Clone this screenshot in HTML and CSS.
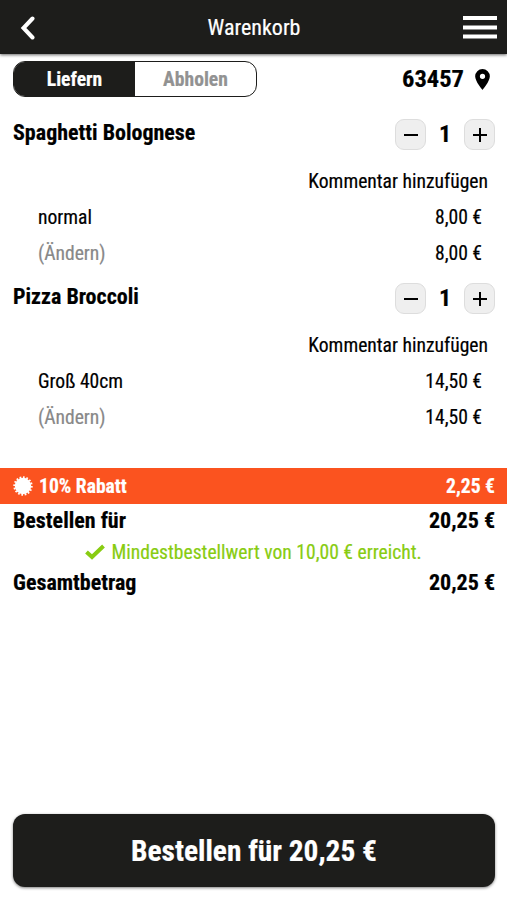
FILE: index.html
```html
<!DOCTYPE html>
<html lang="de">
<head>
  <meta charset="UTF-8">
  <meta name="viewport" content="width=device-width, initial-scale=1">
  <title>Warenkorb</title>
  <link rel="stylesheet" href="styles.css">
</head>
<body>
  <header class="topbar">
    <svg class="back" viewBox="0 0 16 24"><path d="M12.500 2.500 3.500 12l9 9.500"/></svg>
    <h1>Warenkorb</h1>
    <svg class="menu" viewBox="0 0 34 24"><path d="M0 2h34M0 11.500h34M0 20.500h34"/></svg>
  </header>

  <main>
    <div class="delivery">
      <div class="toggle">
        <span class="active">Liefern</span>
        <span>Abholen</span>
      </div>
      <div class="zip">
        <span>63457</span>
        <svg class="pin" viewBox="0 0 14 20"><path fill-rule="evenodd" d="M7 0a7 7 0 0 0-7 7c0 5 7 13 7 13s7-8 7-13a7 7 0 0 0-7-7zm0 4.500a2.500 2.500 0 1 1 0 5 2.500 2.500 0 0 1 0-5z"/></svg>
      </div>
    </div>

    <section class="item">
      <div class="item-head">
        <h2>Spaghetti Bolognese</h2>
        <div class="amount">
          <button type="button"><svg viewBox="0 0 14 14"><path d="M0 7h14"/></svg></button>
          <span>1</span>
          <button type="button"><svg viewBox="0 0 14 14"><path d="M0 7h14M7 0v14"/></svg></button>
        </div>
      </div>
      <div class="comment">Kommentar hinzufügen</div>
      <div class="option"><span>normal</span><span>8,00 €</span></div>
      <div class="option"><span class="change">(Ändern)</span><span>8,00 €</span></div>
    </section>

    <section class="item">
      <div class="item-head">
        <h2>Pizza Broccoli</h2>
        <div class="amount">
          <button type="button"><svg viewBox="0 0 14 14"><path d="M0 7h14"/></svg></button>
          <span>1</span>
          <button type="button"><svg viewBox="0 0 14 14"><path d="M0 7h14M7 0v14"/></svg></button>
        </div>
      </div>
      <div class="comment">Kommentar hinzufügen</div>
      <div class="option"><span>Groß 40cm</span><span>14,50 €</span></div>
      <div class="option"><span class="change">(Ändern)</span><span>14,50 €</span></div>
    </section>

    <div class="discount">
      <svg class="badge" viewBox="0 0 20 20"><circle cx="10" cy="10" r="8.200"/><circle class="teeth" cx="10" cy="10" r="8.700" pathLength="32"/></svg>
      <span>10% Rabatt</span>
      <span class="price">2,25 €</span>
    </div>
    <div class="total"><span>Bestellen für</span><span>20,25 €</span></div>
    <div class="minimum">
      <svg class="check" viewBox="0 0 20 16"><path d="M1.500 8 7 13 18.500 2"/></svg>
      <span>Mindestbestellwert von 10,00 € erreicht.</span>
    </div>
    <div class="total"><span>Gesamtbetrag</span><span>20,25 €</span></div>
  </main>

  <button class="order" type="button">Bestellen für 20,25 €</button>
</body>
</html>
```

FILE: styles.css
```css
* { box-sizing: border-box; }
body {
  margin: 0;
  height: 100vh;
  display: flex;
  flex-direction: column;
  background: #fff;
  color: #000;
  font-family: "Roboto Condensed", Roboto, sans-serif;
  font-stretch: 75%;
  font-size: 19.6px;
  line-height: 24px;
  -webkit-text-stroke: .2px;
}
svg { display: block; fill: none; }
button { font: inherit; font-stretch: 75%; }
h1, h2 { margin: 0; }

.topbar {
  flex: none;
  display: flex;
  justify-content: space-between;
  align-items: center;
  height: 54px;
  padding: 2px 10px 0 20px;
  background: #1d1d1b;
  color: #fff;
  box-shadow: 0 1px 3px rgba(0,0,0,.6);
}
.topbar h1 { font-size: 22px; font-weight: 400; margin-left: 9px; }
.back { width: 16px; height: 24px; stroke: #fff; stroke-width: 4; stroke-linecap: round; }
.menu { width: 34px; height: 24px; stroke: #fff; stroke-width: 4; }

main { flex: 1; }
.delivery {
  display: flex;
  justify-content: space-between;
  align-items: center;
  padding: 7px 17px 0 13px;
}
.toggle {
  display: flex;
  width: 244px;
  height: 36px;
  border: 1px solid #1d1d1b;
  border-radius: 12px;
  overflow: hidden;
  font-weight: 700;
  line-height: 36px;
  text-align: center;
  color: #929292;
}
.toggle span { flex: 1; }
.toggle .active { background: #1d1d1b; color: #fff; }
.zip { display: flex; align-items: center; gap: 11px; font-size: 24.5px; font-weight: 700; }
.pin { width: 15px; height: 21px; fill: #000; }

.item { height: 164px; padding: 0 12px 0 13px; }
.delivery + .item { margin-top: 22px; }
.item-head { display: flex; justify-content: space-between; height: 44px; }
.item-head h2 { font-size: 22px; font-weight: 700; line-height: 27px; }
.amount { display: flex; height: 30px; }
.amount span { width: 38px; text-align: center; font-size: 24px; font-weight: 700; line-height: 30px; }
.amount button {
  display: flex;
  align-items: center;
  justify-content: center;
  width: 31px;
  height: 31px;
  padding: 0;
  border: 1px solid #ddd;
  border-radius: 9px;
  background: #efefef;
}
.amount svg { width: 14px; height: 14px; stroke: #000; stroke-width: 2; }
.comment { height: 36px; line-height: 38px; padding-right: 7px; text-align: right; }
.option {
  display: flex;
  justify-content: space-between;
  height: 36px;
  line-height: 38px;
  padding: 0 13px 0 25px;
}
.change { color: #888; }

.discount {
  display: flex;
  align-items: center;
  gap: 6px;
  height: 36px;
  line-height: 38px;
  margin-top: 21px;
  padding: 0 12px 0 13px;
  background: #fb531f;
  color: #fff;
  font-weight: 700;
}
.discount span { height: 36px; }
.discount .price { margin-left: auto; }
.badge { width: 20px; height: 20px; fill: #fff; }
.badge .teeth { fill: none; stroke: #fff; stroke-width: 2; stroke-dasharray: 1; }
.total {
  display: flex;
  justify-content: space-between;
  height: 34px;
  line-height: 34px;
  padding: 0 12px 0 13px;
  font-size: 22px;
  font-weight: 700;
}
.minimum {
  display: flex;
  align-items: center;
  justify-content: center;
  gap: 6px;
  height: 28px;
  line-height: 30px;
  color: #8c1;
}
.minimum span { height: 28px; }
.check { width: 20px; height: 16px; stroke: #8c1; stroke-width: 4; }

.order {
  flex: none;
  height: 73px;
  margin: 0 12px 13px 13px;
  border: 0;
  border-radius: 12px;
  background: #1d1d1b;
  color: #fff;
  font-size: 29.4px;
  font-weight: 700;
  box-shadow: 0 1px 3px rgba(0,0,0,.5);
}
```
